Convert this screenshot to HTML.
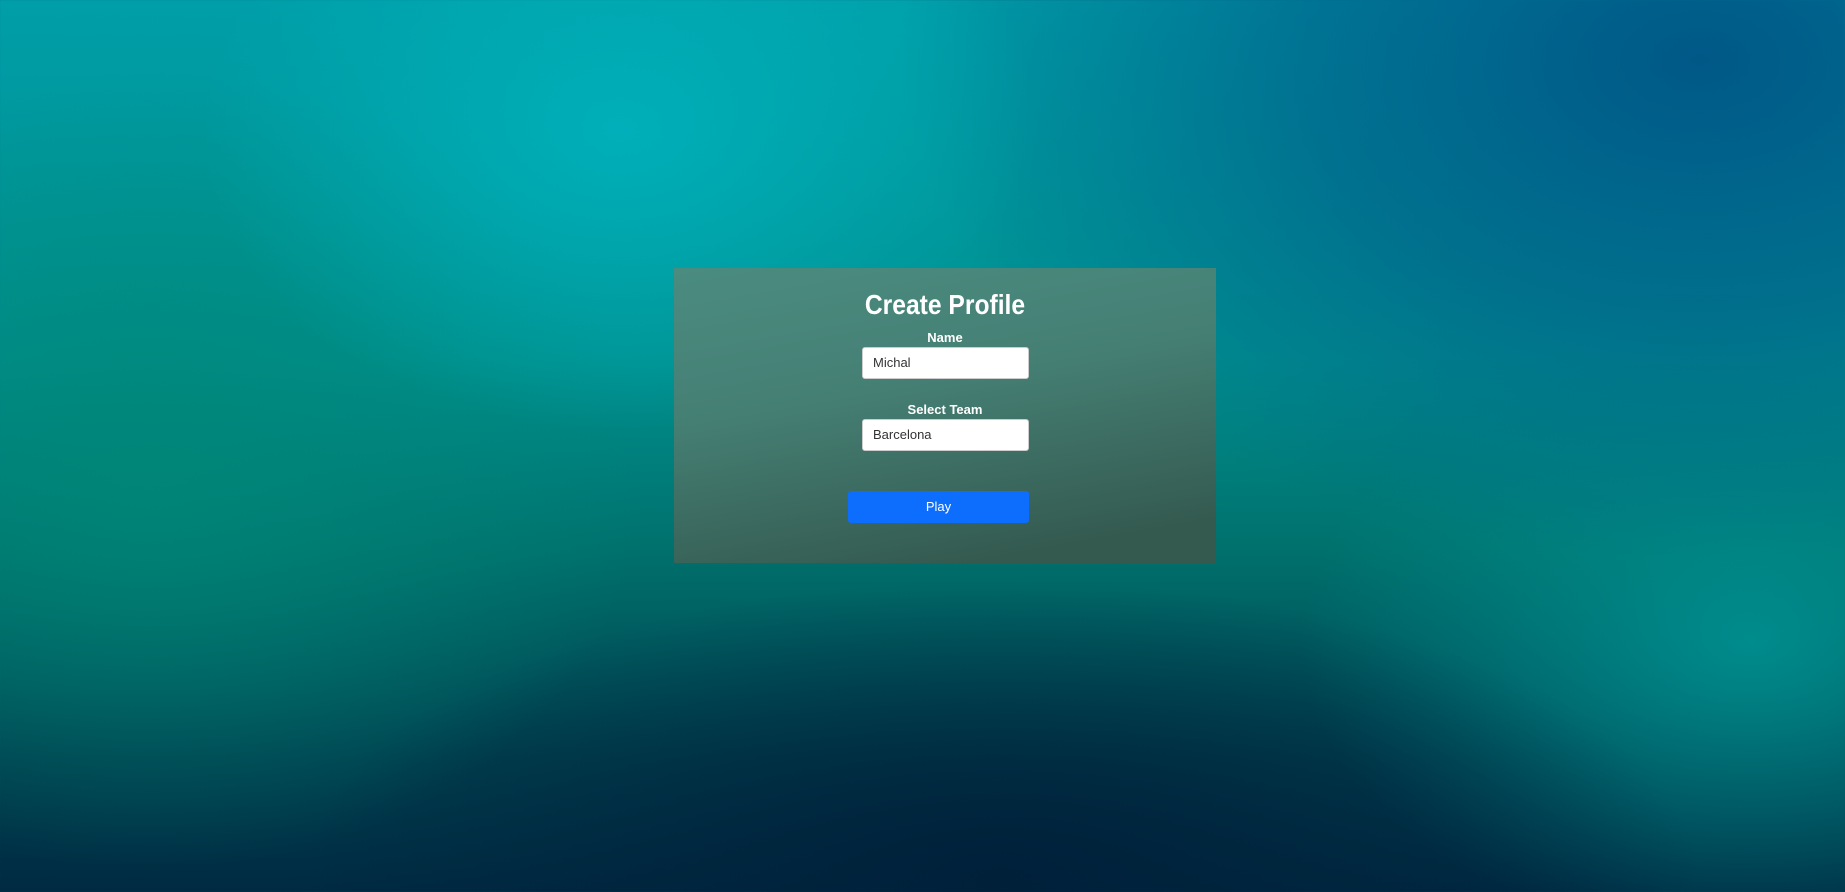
<!DOCTYPE html>
<html><head><meta charset="utf-8"><style>
html,body{margin:0;padding:0;width:1845px;height:892px;overflow:hidden}
body{position:relative;font-family:"Liberation Sans","DejaVu Sans",sans-serif;
background:
radial-gradient(ellipse 420px 300px at 620px 130px, rgba(0,178,188,0.9), rgba(0,178,188,0) 100%),
radial-gradient(ellipse 800px 500px at 1700px 60px, rgba(0,88,135,1), rgba(0,88,135,0.6) 50%, rgba(0,88,135,0) 100%),
radial-gradient(ellipse 700px 300px at 1000px 880px, rgba(0,32,58,1), rgba(0,32,58,0) 100%),
radial-gradient(ellipse 450px 300px at 1750px 640px, rgba(0,145,145,0.9), rgba(0,145,145,0) 100%),
radial-gradient(ellipse 500px 400px at 150px 470px, rgba(0,135,120,0.85), rgba(0,135,120,0) 100%),
linear-gradient(180deg,#009ea8 0%,#00908f 40%,#00706c 62%,#003f4e 85%,#002a42 100%);}
.panel{position:absolute;left:674px;top:268px;width:542px;height:295px;
background:linear-gradient(170deg,#4b8c80 0%,#457f74 40%,#34594f 90%);}
h1{position:absolute;left:0;top:289px;margin:0;text-align:center;color:#fff;font-size:28px;font-weight:bold;}
.lbl{position:absolute;left:0;width:1890px;text-align:center;color:#fff;font-size:13px;font-weight:bold;}
.inp{position:absolute;left:862px;background:#fff;border:1px solid #ccc;border-radius:3px;color:#333;font-size:13px;line-height:30px;padding-left:10px;box-sizing:border-box;width:167px;height:32px}
.btn{position:absolute;left:848px;top:491px;width:181px;height:32px;background:#0d6efd;border-radius:3px;color:#fff;font-size:13px;text-align:center;line-height:32px}
</style></head><body>
<div class="panel"></div>
<h1 style="width:1890px;transform:scaleX(0.88);transform-origin:945px 0">Create Profile</h1>
<div class="lbl" style="top:330px">Name</div>
<div class="inp" style="top:347px">Michal</div>
<div class="lbl" style="top:402px">Select Team</div>
<div class="inp" style="top:419px">Barcelona</div>
<div class="btn">Play</div>
</body></html>
